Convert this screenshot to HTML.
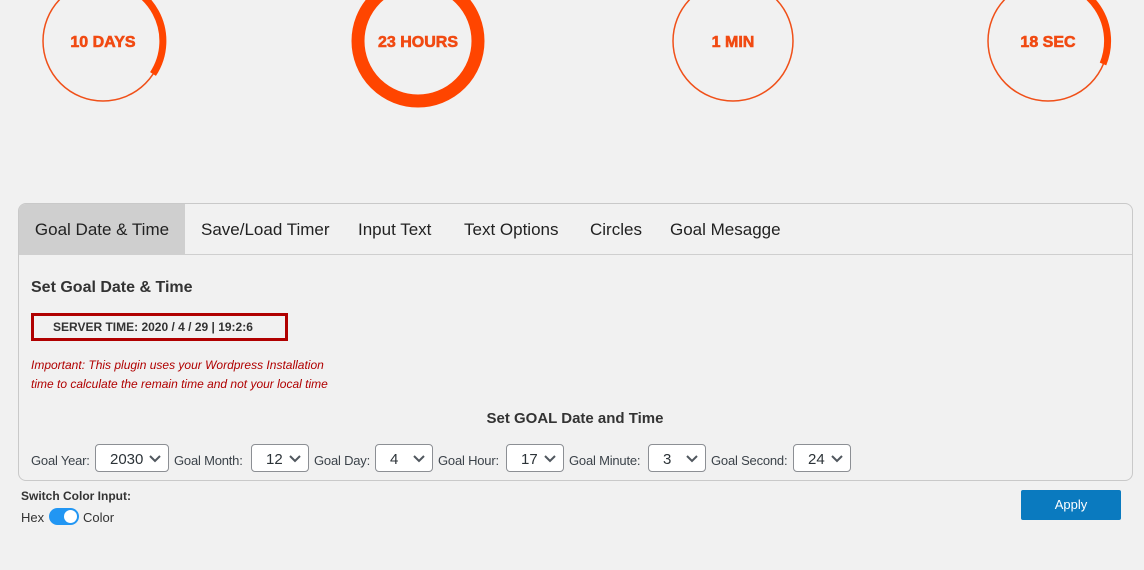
<!DOCTYPE html>
<html><head><style>
body{margin:0;width:1144px;height:570px;background:#f1f1f1;font-family:"Liberation Sans",sans-serif;position:relative;overflow:hidden;color:#3c434a}
.abs{position:absolute}
.panel{left:18px;top:203px;width:1113px;height:276px;border:1px solid #c9c9c9;border-radius:8px;background:#f1f1f1;overflow:hidden}
.tabs{position:absolute;left:0;top:0;width:100%;height:50px;border-bottom:1px solid #cfcfcf}
.tab{position:absolute;top:0;height:50px;line-height:52px;font-size:17px;color:#222}
.sel{display:inline-block;position:absolute;top:444px;height:28px;border:1px solid #8c8f94;border-radius:4px;background:#fff;font-size:15px;line-height:30px;color:#2c3338;box-sizing:border-box}
.sel span{position:absolute;left:14px}
.sel svg{position:absolute;right:7px;top:10px}
.lbl{position:absolute;top:453px;font-size:13px;color:#3c434a;letter-spacing:-0.2px}
</style></head><body>
<svg class="abs" style="left:0;top:0" width="1144" height="120">
<g font-family="Liberation Sans" font-weight="bold" font-size="16" fill="#f14a12" stroke="#f14a12" stroke-width="0.6" text-anchor="middle">
<circle cx="103" cy="41" r="60" fill="none" stroke="#f05019" stroke-width="1.5"/>
<path d="M103 -19 A60 60 0 0 1 153 74" fill="none" stroke="#ff4500" stroke-width="7"/>
<text x="103" y="47">10 DAYS</text>
<circle cx="418" cy="41" r="60" fill="none" stroke="#ff4500" stroke-width="13"/>
<text x="418" y="47">23 HOURS</text>
<circle cx="733" cy="41" r="60" fill="none" stroke="#f05019" stroke-width="1.5"/>
<text x="733" y="47">1 MIN</text>
<circle cx="1048" cy="41" r="60" fill="none" stroke="#f05019" stroke-width="1.5"/>
<path d="M1048 -19 A60 60 0 0 1 1103 64" fill="none" stroke="#ff4500" stroke-width="7"/>
<text x="1048" y="47">18 SEC</text>
</g></svg>
<div class="abs panel">
<div class="tabs">
<div class="tab" style="left:0;width:166px;background:#cfcfcf;text-align:center">Goal Date &amp; Time</div>
<div class="tab" style="left:182px">Save/Load Timer</div>
<div class="tab" style="left:339px">Input Text</div>
<div class="tab" style="left:445px">Text Options</div>
<div class="tab" style="left:571px">Circles</div>
<div class="tab" style="left:651px">Goal Mesagge</div>
</div>
</div>
<div class="abs" style="left:31px;top:279px;font-size:16px;font-weight:bold;color:#333">Set Goal Date &amp; Time</div>
<div class="abs" style="left:31px;top:313px;width:251px;height:22px;border:3px solid #b00000;font-size:12px;font-weight:bold;line-height:22px;text-indent:19px;color:#333">SERVER TIME: 2020 / 4 / 29 | 19:2:6</div>
<div class="abs" style="left:31px;top:356px;font-size:12px;font-style:italic;color:#b00000;line-height:19px">Important: This plugin uses your Wordpress Installation<br>time to calculate the remain time and not your local time</div>
<div class="abs" style="left:0;width:1150px;text-align:center;top:410px;font-size:15px;font-weight:bold;color:#333">Set GOAL Date and Time</div>
<div class="lbl" style="left:31px">Goal Year:</div>
<div class="sel" style="left:95px;width:74px"><span>2030</span><svg width="12" height="8"><path d="M1 1l5 5 5-5" fill="none" stroke="#50575e" stroke-width="2"/></svg></div>
<div class="lbl" style="left:174px">Goal Month:</div>
<div class="sel" style="left:251px;width:58px"><span>12</span><svg width="12" height="8"><path d="M1 1l5 5 5-5" fill="none" stroke="#50575e" stroke-width="2"/></svg></div>
<div class="lbl" style="left:314px">Goal Day:</div>
<div class="sel" style="left:375px;width:58px"><span>4</span><svg width="12" height="8"><path d="M1 1l5 5 5-5" fill="none" stroke="#50575e" stroke-width="2"/></svg></div>
<div class="lbl" style="left:438px">Goal Hour:</div>
<div class="sel" style="left:506px;width:58px"><span>17</span><svg width="12" height="8"><path d="M1 1l5 5 5-5" fill="none" stroke="#50575e" stroke-width="2"/></svg></div>
<div class="lbl" style="left:569px">Goal Minute:</div>
<div class="sel" style="left:648px;width:58px"><span>3</span><svg width="12" height="8"><path d="M1 1l5 5 5-5" fill="none" stroke="#50575e" stroke-width="2"/></svg></div>
<div class="lbl" style="left:711px">Goal Second:</div>
<div class="sel" style="left:793px;width:58px"><span>24</span><svg width="12" height="8"><path d="M1 1l5 5 5-5" fill="none" stroke="#50575e" stroke-width="2"/></svg></div>
<div class="abs" style="left:21px;top:489px;font-size:12px;font-weight:bold;color:#333">Switch Color Input:</div>
<div class="abs" style="left:21px;top:510px;font-size:13px;color:#333">Hex</div>
<div class="abs" style="left:49px;top:508px;width:30px;height:17px;border-radius:9px;background:#2196f3"><div style="position:absolute;left:15px;top:2px;width:13px;height:13px;border-radius:50%;background:#fff"></div></div>
<div class="abs" style="left:83px;top:510px;font-size:13px;color:#333">Color</div>
<div class="abs" style="left:1021px;top:490px;width:100px;height:30px;background:#0a7abf;border-radius:2px;color:#fff;font-size:13px;text-align:center;line-height:30px">Apply</div>
</body></html>
